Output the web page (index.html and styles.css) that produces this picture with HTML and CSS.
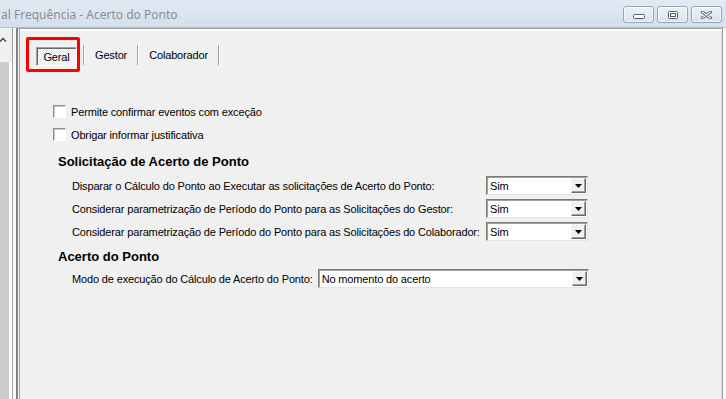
FILE: index.html
```html
<!DOCTYPE html>
<html lang="pt-BR">
<head>
  <meta charset="UTF-8">
  <meta name="viewport" content="width=device-width, initial-scale=1.0">
  <title>Acerto do Ponto</title>
  <link rel="stylesheet" href="styles.css">
</head>
<body>
  <div class="window">
    <div class="titlebar">
      <span class="title">al Frequência - Acerto do Ponto</span>
      <div class="caption-buttons">
        <span class="cap-btn cap-min">
          <svg width="12" height="5" viewBox="0 0 12 5"><rect x="0.5" y="0.5" width="11" height="4" rx="1" fill="#fff" stroke="#555b63"/></svg>
        </span>
        <span class="cap-btn cap-max">
          <svg width="10" height="8" viewBox="0 0 10 8"><rect x="0.5" y="0.5" width="9" height="7" rx="1" fill="#fff" stroke="#555b63"/><rect x="2.5" y="2.5" width="5" height="3" fill="none" stroke="#555b63"/></svg>
        </span>
        <span class="cap-btn cap-close">
          <svg width="11" height="8" viewBox="0 0 11 8">
            <path d="M1.5 1 L9.5 7 M9.5 1 L1.5 7" stroke="#555b63" stroke-width="3" stroke-linecap="round"/>
            <path d="M1.5 1 L9.5 7 M9.5 1 L1.5 7" stroke="#fff" stroke-width="1.2" stroke-linecap="round"/>
          </svg>
        </span>
      </div>
    </div>

    <div class="client">
      <div class="side">
        <div class="side-top">
          <svg width="8" height="6" viewBox="0 0 8 6"><path d="M0 4.5 L3 1.5 L6 4.5" fill="none" stroke="#404040" stroke-width="1.3"/></svg>
        </div>
        <div class="side-track"></div>
      </div>
      <div class="splitter"></div>

      <div class="panel">
        <div class="tabs">
          <div class="tab-mark">
            <span class="tab active">Geral</span>
          </div>
          <span class="tab-sep first"></span>
          <span class="tab">Gestor</span>
          <span class="tab-sep"></span>
          <span class="tab">Colaborador</span>
          <span class="tab-sep"></span>
        </div>

        <div class="options">
          <label class="check-row"><span class="check"></span>Permite confirmar eventos com exceção</label>
          <label class="check-row"><span class="check"></span>Obrigar informar justificativa</label>
        </div>

        <h2 class="section-title">Solicitação de Acerto de Ponto</h2>
        <div class="field-grid">
          <span class="field-label">Disparar o Cálculo do Ponto ao Executar as solicitações de Acerto do Ponto:</span>
          <div class="combo"><span class="combo-text">Sim</span><span class="combo-btn"><svg width="7" height="4" viewBox="0 0 7 4"><path d="M0 0 H7 L3.5 4 Z" fill="#000"/></svg></span></div>

          <span class="field-label">Considerar parametrização de Período do Ponto para as Solicitações do Gestor:</span>
          <div class="combo"><span class="combo-text">Sim</span><span class="combo-btn"><svg width="7" height="4" viewBox="0 0 7 4"><path d="M0 0 H7 L3.5 4 Z" fill="#000"/></svg></span></div>

          <span class="field-label">Considerar parametrização de Período do Ponto para as Solicitações do Colaborador:</span>
          <div class="combo"><span class="combo-text">Sim</span><span class="combo-btn"><svg width="7" height="4" viewBox="0 0 7 4"><path d="M0 0 H7 L3.5 4 Z" fill="#000"/></svg></span></div>
        </div>

        <h2 class="section-title section-title-2">Acerto do Ponto</h2>
        <div class="field-row">
          <span class="field-label">Modo de execução do Cálculo de Acerto do Ponto:</span>
          <div class="combo combo-wide"><span class="combo-text">No momento do acerto</span><span class="combo-btn"><svg width="7" height="4" viewBox="0 0 7 4"><path d="M0 0 H7 L3.5 4 Z" fill="#000"/></svg></span></div>
        </div>
      </div>
    </div>
  </div>
</body>
</html>
```

FILE: styles.css
```css
body {
  margin: 0;
  font-family: 'Liberation Sans', Arial, sans-serif;
  font-size: 11px;
  letter-spacing: -0.15px;
  color: #000;
  background-color: #f0f0f0;
}

.window {
  height: 399px;
  display: flex;
  flex-direction: column;
  overflow: hidden;
}

/* title bar */
.titlebar {
  height: 27px;
  flex: none;
  display: flex;
  justify-content: space-between;
  padding: 0 4px 0 1px;
  background: linear-gradient(#e1e9f4, #d4dfec);
}

.title {
  font-family: 'Noto Sans', 'Open Sans', sans-serif;
  font-size: 12px;
  letter-spacing: 0;
  color: #8a8d91;
  line-height: 27px;
  padding-top: 1px;
}

.caption-buttons {
  display: flex;
  gap: 3px;
  margin-top: 6px;
}

.cap-btn {
  width: 31px;
  height: 17px;
  box-sizing: border-box;
  border: 1px solid #97a5b8;
  border-radius: 3px;
  background: linear-gradient(#eef2f8, #d9e2ee);
  box-shadow: inset 0 0 0 1px rgba(255, 255, 255, 0.6);
  display: flex;
  align-items: center;
  justify-content: center;
}

.cap-min svg {
  margin-top: 4px;
}

/* client area */
.client {
  flex: 1;
  display: flex;
  border-top: 1px solid #b7c0cc;
  padding-right: 3px;
  background-color: #f7f7f7;
}

.side {
  width: 12px;
  border-right: 1px solid #a0a0a0;
  display: flex;
  flex-direction: column;
  background-color: #f0f0f0;
}

.side-top {
  height: 34px;
  padding-top: 9px;
  box-sizing: border-box;
}

.side-top svg {
  display: block;
}

.side-track {
  flex: 1;
  background-color: #cdcdcd;
  border-right: 3px solid #fff;
}

.splitter {
  width: 3px;
  background-color: #f8f8f8;
}

.panel {
  flex: 1;
  background-color: #f0f0f0;
  border-left: 2px solid #808080;
  border-top: 1px solid #a0a0a0;
  border-right: 1px solid #a0a0a0;
  box-shadow: inset 1px 0 #f8f8f8, inset 2px 0 #a0a0a0, inset 0 2px #fff, inset -1px 0 #d6d6d6;
  padding: 8px 0 0 8px;
}

/* tabs */
.tabs {
  display: flex;
  align-items: center;
  height: 35px;
}

.tab-mark {
  border: 3px solid #ff0000;
  border-radius: 2px;
  padding: 7px 0 3px 7px;
}

.tab {
  padding: 0 10px;
}

.tab.active {
  width: 41px;
  height: 19px;
  box-sizing: border-box;
  padding: 0;
  display: flex;
  align-items: center;
  justify-content: center;
  border: 1px solid;
  border-color: #a0a0a0 #fff #fff #a0a0a0;
  box-shadow: inset 1px 1px #696969;
  background: repeating-conic-gradient(#fff 0 25%, #e6e6e6 0 50%) 0 0 / 2px 2px;
}

.tab-sep {
  width: 1px;
  height: 20px;
  background-color: #a0a0a0;
  border-right: 1px solid #fff;
}

.tab-sep.first {
  margin-left: 3px;
}

/* check boxes */
.options {
  margin: 28px 0 0 27px;
}

.check-row {
  display: flex;
  align-items: center;
  gap: 5px;
  height: 23px;
}

.check {
  width: 13px;
  height: 13px;
  box-sizing: border-box;
  background-color: #fff;
  border: 1px solid;
  border-color: #8e8e8e #fff #fff #8e8e8e;
  box-shadow: inset 1px 1px #c9c9c9;
}

/* sections */
.section-title {
  margin: 8px 0 0 32px;
  font-size: 13px;
  font-weight: bold;
  letter-spacing: 0;
  height: 16px;
  line-height: 16px;
}

.section-title-2 {
  margin-top: 6px;
}

.field-grid {
  display: grid;
  grid-template-columns: 410px 102px;
  grid-auto-rows: 23px;
  column-gap: 4px;
  align-items: center;
  margin: 4px 0 0 46px;
}

.field-row {
  display: flex;
  align-items: center;
  gap: 5px;
  height: 23px;
  margin: 2px 0 0 46px;
}

.field-label {
  white-space: nowrap;
}

/* combo boxes */
.combo {
  height: 19px;
  box-sizing: border-box;
  display: flex;
  align-items: center;
  background-color: #fff;
  border: 1px solid;
  border-color: #7a7a7a #e3e3e3 #e3e3e3 #7a7a7a;
  box-shadow: inset 1px 1px #a0a0a0;
}

.combo-wide {
  width: 271px;
}

.combo-text {
  flex: 1;
  padding-left: 3px;
}

.combo-btn {
  width: 15px;
  height: 15px;
  box-sizing: border-box;
  margin-right: 1px;
  display: flex;
  align-items: center;
  justify-content: center;
  background-color: #f0f0f0;
  border: 1px solid;
  border-color: #f8f8f8 #696969 #696969 #f8f8f8;
  box-shadow: inset -1px -1px #a0a0a0;
}
```
